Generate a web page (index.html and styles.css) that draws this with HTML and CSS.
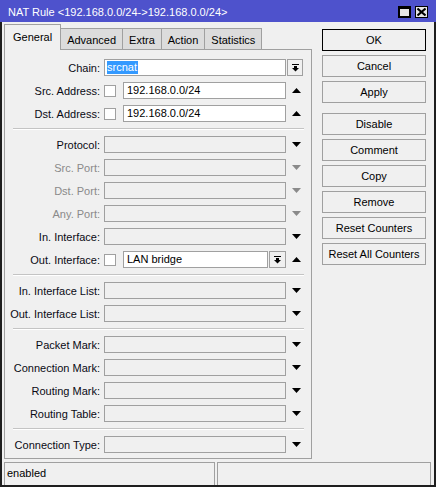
FILE: index.html
```html
<!DOCTYPE html>
<html>
<head>
<meta charset="utf-8">
<link rel="stylesheet" href="styles.css">
</head>
<body>
<div class="window">
  <div class="titlebar">
    <span class="title">NAT Rule &lt;192.168.0.0/24-&gt;192.168.0.0/24&gt;</span>
    <div class="tbtns">
      <span class="tbtn"><svg width="11" height="10" viewBox="0 0 11 10"><rect x="0.5" y="0.5" width="10" height="9" fill="none" stroke="#000"/><rect x="0" y="0" width="11" height="2" fill="#000"/></svg></span>
      <span class="tbtn"><svg width="9" height="8" viewBox="0 0 9 8"><path d="M0.5 0.5 L8.5 7.5 M8.5 0.5 L0.5 7.5" stroke="#000" stroke-width="2"/></svg></span>
    </div>
  </div>
  <div class="body">
    <div class="leftcol">
      <div class="tabs">
        <div class="tab active">General</div>
        <div class="tab">Advanced</div>
        <div class="tab">Extra</div>
        <div class="tab">Action</div>
        <div class="tab">Statistics</div>
      </div>
      <div class="panel">
        <div class="row">
          <div class="lbl">Chain:</div>
          <div class="field"><div class="input white"><span class="sel">srcnat</span></div></div>
          <div class="side"><span class="ddbtn side-btn"><svg width="7" height="8" viewBox="0 0 7 8"><rect x="0" y="0" width="7" height="1"/><rect x="2" y="2" width="3" height="2"/><polygon points="0,4 7,4 3.5,7.5"/></svg></span></div>
        </div>
        <div class="row">
          <div class="lbl">Src. Address:</div>
          <div class="field"><span class="chk"></span><div class="input white">192.168.0.0/24</div></div>
          <div class="side"><svg class="arr" width="9" height="5" viewBox="0 0 9 5"><polygon points="4.5,0 9,5 0,5"/></svg></div>
        </div>
        <div class="row">
          <div class="lbl">Dst. Address:</div>
          <div class="field"><span class="chk"></span><div class="input white">192.168.0.0/24</div></div>
          <div class="side"><svg class="arr" width="9" height="5" viewBox="0 0 9 5"><polygon points="4.5,0 9,5 0,5"/></svg></div>
        </div>
        <div class="sep"></div>
        <div class="row">
          <div class="lbl">Protocol:</div>
          <div class="field"><div class="input"></div></div>
          <div class="side"><svg class="arr" width="9" height="5" viewBox="0 0 9 5"><polygon points="0,0 9,0 4.5,5"/></svg></div>
        </div>
        <div class="row dis">
          <div class="lbl">Src. Port:</div>
          <div class="field"><div class="input"></div></div>
          <div class="side"><svg class="arr" width="9" height="5" viewBox="0 0 9 5"><polygon points="0,0 9,0 4.5,5"/></svg></div>
        </div>
        <div class="row dis">
          <div class="lbl">Dst. Port:</div>
          <div class="field"><div class="input"></div></div>
          <div class="side"><svg class="arr" width="9" height="5" viewBox="0 0 9 5"><polygon points="0,0 9,0 4.5,5"/></svg></div>
        </div>
        <div class="row dis">
          <div class="lbl">Any. Port:</div>
          <div class="field"><div class="input"></div></div>
          <div class="side"><svg class="arr" width="9" height="5" viewBox="0 0 9 5"><polygon points="0,0 9,0 4.5,5"/></svg></div>
        </div>
        <div class="row">
          <div class="lbl">In. Interface:</div>
          <div class="field"><div class="input"></div></div>
          <div class="side"><svg class="arr" width="9" height="5" viewBox="0 0 9 5"><polygon points="0,0 9,0 4.5,5"/></svg></div>
        </div>
        <div class="row">
          <div class="lbl">Out. Interface:</div>
          <div class="field"><span class="chk"></span><div class="input white">LAN bridge</div><span class="ddbtn"><svg width="7" height="8" viewBox="0 0 7 8"><rect x="0" y="0" width="7" height="1"/><rect x="2" y="2" width="3" height="2"/><polygon points="0,4 7,4 3.5,7.5"/></svg></span></div>
          <div class="side"><svg class="arr" width="9" height="5" viewBox="0 0 9 5"><polygon points="4.5,0 9,5 0,5"/></svg></div>
        </div>
        <div class="sep"></div>
        <div class="row">
          <div class="lbl">In. Interface List:</div>
          <div class="field"><div class="input"></div></div>
          <div class="side"><svg class="arr" width="9" height="5" viewBox="0 0 9 5"><polygon points="0,0 9,0 4.5,5"/></svg></div>
        </div>
        <div class="row">
          <div class="lbl">Out. Interface List:</div>
          <div class="field"><div class="input"></div></div>
          <div class="side"><svg class="arr" width="9" height="5" viewBox="0 0 9 5"><polygon points="0,0 9,0 4.5,5"/></svg></div>
        </div>
        <div class="sep"></div>
        <div class="row">
          <div class="lbl">Packet Mark:</div>
          <div class="field"><div class="input"></div></div>
          <div class="side"><svg class="arr" width="9" height="5" viewBox="0 0 9 5"><polygon points="0,0 9,0 4.5,5"/></svg></div>
        </div>
        <div class="row">
          <div class="lbl">Connection Mark:</div>
          <div class="field"><div class="input"></div></div>
          <div class="side"><svg class="arr" width="9" height="5" viewBox="0 0 9 5"><polygon points="0,0 9,0 4.5,5"/></svg></div>
        </div>
        <div class="row">
          <div class="lbl">Routing Mark:</div>
          <div class="field"><div class="input"></div></div>
          <div class="side"><svg class="arr" width="9" height="5" viewBox="0 0 9 5"><polygon points="0,0 9,0 4.5,5"/></svg></div>
        </div>
        <div class="row">
          <div class="lbl">Routing Table:</div>
          <div class="field"><div class="input"></div></div>
          <div class="side"><svg class="arr" width="9" height="5" viewBox="0 0 9 5"><polygon points="0,0 9,0 4.5,5"/></svg></div>
        </div>
        <div class="sep"></div>
        <div class="row">
          <div class="lbl">Connection Type:</div>
          <div class="field"><div class="input"></div></div>
          <div class="side"><svg class="arr" width="9" height="5" viewBox="0 0 9 5"><polygon points="0,0 9,0 4.5,5"/></svg></div>
        </div>
      </div>
    </div>
    <div class="rightcol">
      <div class="btn default">OK</div>
      <div class="btn">Cancel</div>
      <div class="btn">Apply</div>
      <div class="btn gap">Disable</div>
      <div class="btn">Comment</div>
      <div class="btn">Copy</div>
      <div class="btn">Remove</div>
      <div class="btn">Reset Counters</div>
      <div class="btn">Reset All Counters</div>
    </div>
  </div>
  <div class="status">
    <div class="cell c1">enabled</div>
    <div class="cell c2"></div>
  </div>
</div>
</body>
</html>
```
FILE: styles.css
```css
html, body {
  margin: 0;
  padding: 0;
  background: #ffffff;
}
body {
  font-family: "Liberation Sans", Arial, sans-serif;
  font-size: 11px;
  color: #000;
}
.window {
  width: 436px;
  height: 487px;
  box-sizing: border-box;
  background: #f0f0f0;
  border-left: 2px solid #1e1e1e;
  border-right: 2px solid #1e1e1e;
  border-bottom: 2px solid #1e1e1e;
  display: flex;
  flex-direction: column;
}
.titlebar {
  height: 22px;
  margin: 0 -2px;
  background: #4e52cc;
  display: flex;
  align-items: center;
  justify-content: space-between;
  padding: 0 8px 0 8px;
  flex-shrink: 0;
}
.title {
  color: #fff;
  font-size: 11px;
  padding-top: 1px;
}
.tbtns {
  display: flex;
  gap: 4px;
  padding-top: 2px;
}
.tbtn {
  width: 13px;
  height: 12px;
  box-sizing: border-box;
  border: 1px solid #000;
  background: #e6e6e6;
  display: flex;
  align-items: center;
  justify-content: center;
}
.tbtn svg { display: block; }
.body {
  display: flex;
  padding-left: 2px;
  height: 438px;
}
.leftcol {
  width: 308px;
  display: flex;
  flex-direction: column;
}
.tabs {
  display: flex;
  align-items: flex-end;
  height: 27px;
  padding-left: 0;
  position: relative;
  z-index: 1;
}
.tab {
  height: 21px;
  box-sizing: border-box;
  border: 1px solid #a0a0a0;
  border-bottom: none;
  margin-right: -1px;
  background: #dcdcdc;
  padding: 3px 6px 0 6px;
  line-height: 16px;
  color: #000;
}
.tab.active {
  height: 25px;
  background: #f0f0f0;
  padding: 4px 8px 0 8px;
  margin-bottom: -1px;
  height: 26px;
}
.panel {
  border: 1px solid #a0a0a0;
  height: 410px;
  box-sizing: border-box;
  padding-top: 9px;
}
.row {
  display: flex;
  align-items: center;
  height: 17px;
  margin-top: 6px;
}
.row:first-child { margin-top: 0; }
.lbl {
  width: 95px;
  margin-right: 4px;
  text-align: right;
  white-space: nowrap;
  color: #0a0a14;
}
.dis .lbl { color: #8a8a8a; }
.field {
  width: 182px;
  height: 17px;
  display: flex;
  align-items: center;
}
.input {
  flex: 1;
  height: 17px;
  box-sizing: border-box;
  border: 1px solid #a0a0a0;
  background: #f0f0f0;
  padding-left: 3px;
  line-height: 15px;
  white-space: nowrap;
  overflow: hidden;
}
.input.white { background: #fff; }
.sel {
  background: #3399ff;
  color: #fff;
  padding: 0 1px 0 0;
  margin-left: -1px;
  display: inline-block;
  line-height: 13px;
}
.chk {
  width: 12px;
  height: 12px;
  box-sizing: border-box;
  border: 1px solid #a0a0a0;
  background: #fff;
  margin-right: 7px;
  flex-shrink: 0;
}
.ddbtn {
  width: 17px;
  height: 17px;
  box-sizing: border-box;
  border: 1px solid #a0a0a0;
  background: #f0f0f0;
  display: flex;
  align-items: center;
  justify-content: center;
  flex-shrink: 0;
  margin-left: 1px;
}
.ddbtn svg { fill: #000; display: block; }
.side {
  width: 24px;
  height: 17px;
  display: flex;
  align-items: center;
  padding-left: 6px;
  box-sizing: border-box;
}
.side .side-btn {
  margin-left: -5px;
  width: 16px;
}
.arr { fill: #000; display: block; }
.dis .arr { fill: #8a8a8a; }
.sep {
  height: 0;
  border-top: 1px solid #c4c4c4;
  border-bottom: 1px solid #ffffff;
  margin: 6px 7px 0 8px;
}
.rightcol {
  margin-left: 10px;
  width: 104px;
  padding-top: 7px;
  display: flex;
  flex-direction: column;
  gap: 4px;
}
.btn {
  height: 22px;
  box-sizing: border-box;
  border: 1px solid #a0a0a0;
  background: #f0f0f0;
  text-align: center;
  line-height: 20px;
  color: #000;
  white-space: nowrap;
}
.btn.default { border-color: #000; }
.btn.gap { margin-top: 6px; }
.status {
  display: flex;
  padding-left: 2px;
  gap: 2px;
  margin-top: 3px;
  height: 23px;
}
.cell {
  height: 23px;
  box-sizing: border-box;
  border: 1px solid #a0a0a0;
  border-bottom: none;
  line-height: 20px;
  padding-left: 2px;
}
.c1 { width: 211px; }
.c2 { width: 214px; }
```
